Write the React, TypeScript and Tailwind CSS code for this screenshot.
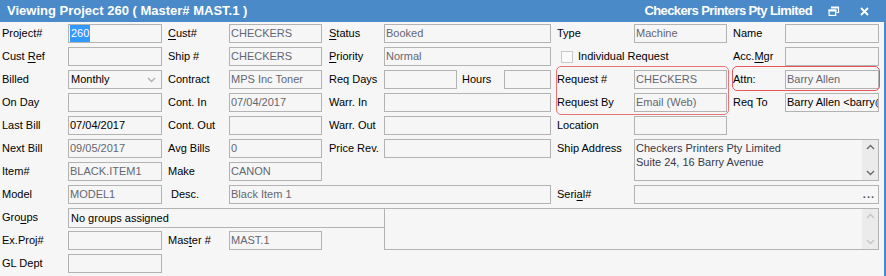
import React from 'react';

type P = { children?: React.ReactNode; className?: string };

// plain label cell
const Label = ({ children, className = '' }: P) => (
  <div className={`flex h-[19px] items-center whitespace-pre text-black ${className}`}>{children}</div>
);

// read-only style text box, dark = editable (black text)
const Box = ({ children, className = '', dark }: P & { dark?: boolean }) => (
  <div
    className={`flex h-[19px] items-center overflow-hidden whitespace-nowrap border border-[#b3b3b3] bg-[#f6f6f6] pl-[1px] ${
      dark ? 'text-black' : 'text-[#646672]'
    } ${className}`}
  >
    {children}
  </div>
);

const U = ({ children }: P) => <span className="underline underline-offset-[2px]">{children}</span>;

const Chevron = ({ up, color }: { up?: boolean; color: string }) => (
  <svg width="9" height="6" viewBox="0 0 9 6">
    <path d={up ? 'M1 5 L4.5 1.5 L8 5' : 'M1 1 L4.5 4.5 L8 1'} fill="none" stroke={color} strokeWidth="1.4" />
  </svg>
);

const Scroll = ({ color }: { color: string }) => (
  <div className="flex w-[16px] flex-col items-center justify-between self-stretch bg-[#ebebeb] py-[4px]">
    <Chevron up color={color} />
    <Chevron color={color} />
  </div>
);

export default function App() {
  return (
    <div className="h-[276px] w-[886px] overflow-hidden border-r-2 border-[#4a8ac9] bg-[#f6f6f6] font-['Liberation_Sans',Arial,sans-serif] text-[11px]">
      {/* title bar */}
      <div className="flex h-[22px] items-center justify-between bg-[#4a8ac9] pl-[7px] pr-[15px] text-[13px] font-bold text-white">
        <span>Viewing Project 260 ( Master# MAST.1 )</span>
        <div className="flex items-center">
          <span className="tracking-[-0.6px]">Checkers Printers Pty Limited</span>
          <svg className="ml-[16px]" width="12" height="10" viewBox="0 0 12 10">
            <path d="M3.5 1.5 H10.5 V6.5 H8.5" fill="none" stroke="white" strokeWidth="1.2" />
            <rect x="3" y="0.5" width="8" height="2" fill="white" />
            <rect x="1.1" y="4.1" width="6.6" height="5.3" fill="none" stroke="white" strokeWidth="1.2" />
            <rect x="0.5" y="3.5" width="8" height="2" fill="white" />
          </svg>
          <svg className="ml-[20px]" width="9" height="9" viewBox="0 0 9 9">
            <path d="M1 1 L8 8 M8 1 L1 8" stroke="white" strokeWidth="1.8" />
          </svg>
        </div>
      </div>

      <div className="grid auto-rows-[19px] grid-cols-[68px_94px_67px_93px_62px_167px_83px_93px_58px_94px] gap-y-[4px] pt-[2px]">
        {/* row 1 */}
        <Label className="col-start-1 pl-[2px]">Project#</Label>
        <Box dark className="pl-0">
          <span className="bg-[#3399ff] px-[1px] text-white">260</span>
        </Box>
        <Label className="pl-[6px]"><U>C</U>ust#</Label>
        <Box>CHECKERS</Box>
        <Label className="pl-[7px]"><U>S</U>tatus</Label>
        <Box>Booked</Box>
        <Label className="pl-[6px]">Type</Label>
        <Box>Machine</Box>
        <Label className="pl-[6px]">Name</Label>
        <Box />

        {/* row 2 */}
        <Label className="col-start-1 pl-[2px]"><span>Cust <U>R</U>ef</span></Label>
        <Box />
        <Label className="pl-[6px]">Ship #</Label>
        <Box>CHECKERS</Box>
        <Label className="pl-[7px]"><U>P</U>riority</Label>
        <Box>Normal</Box>
        <Label className="col-span-2 pl-[10px]">
          <span className="mr-[5px] h-[12px] w-[12px] border border-[#c9c9c9] bg-[#fafafa]" />
          Individual Request
        </Label>
        <Label className="pl-[6px]"><span>Acc.<U>M</U>gr</span></Label>
        <Box />

        {/* row 3 */}
        <Label className="col-start-1 pl-[2px]">Billed</Label>
        <Box dark className="justify-between pl-[2px] pr-[5px]">
          Monthly
          <Chevron color="#b0b0b0" />
        </Box>
        <Label className="pl-[6px]">Contract</Label>
        <Box>MPS Inc Toner</Box>
        <Label className="pl-[7px]">Req Days</Label>
        <div className="flex">
          <Box className="w-[73px]" />
          <Label className="w-[47px] pl-[5px]">Hours</Label>
          <Box className="flex-1" />
        </div>
        <Label className="relative pl-[6px]">
          Request #
          <div className="pointer-events-none absolute left-[5px] top-[-4px] h-[49px] w-[173px] rounded-[5px] border-[1.5px] border-[#ea7377]" />
        </Label>
        <Box>CHECKERS</Box>
        <Label className="relative pl-[6px]">
          Attn:
          <div className="pointer-events-none absolute left-[5px] top-[-4px] h-[25px] w-[148px] rounded-[5px] border-[1.5px] border-[#e6575e]" />
        </Label>
        <Box>Barry Allen</Box>

        {/* row 4 */}
        <Label className="col-start-1 pl-[2px]">On Day</Label>
        <Box />
        <Label className="pl-[6px]">Cont. In</Label>
        <Box>07/04/2017</Box>
        <Label className="pl-[7px]">Warr. In</Label>
        <Box />
        <Label className="pl-[6px]">Request By</Label>
        <Box>Email (Web)</Box>
        <Label className="pl-[6px]">Req To</Label>
        <Box dark>Barry Allen &lt;barry@checkers.com.au&gt;</Box>

        {/* row 5 */}
        <Label className="col-start-1 pl-[2px]">Last Bill</Label>
        <Box dark>07/04/2017</Box>
        <Label className="pl-[6px]">Cont. Out</Label>
        <Box />
        <Label className="pl-[7px]">Warr. Out</Label>
        <Box />
        <Label className="pl-[6px]">Location</Label>
        <Box />

        {/* row 6 */}
        <Label className="col-start-1 pl-[2px]">Next Bill</Label>
        <Box>09/05/2017</Box>
        <Label className="pl-[6px]">Avg Bills</Label>
        <Box>0</Box>
        <Label className="pl-[7px]">Price Rev.</Label>
        <Box />
        <Label className="pl-[6px]">Ship Address</Label>
        <div className="col-span-3 row-span-2 flex border border-[#b3b3b3] bg-[#f6f6f6] text-[#363a48]">
          <div className="flex-1 pl-[1px] pt-[1px] leading-[14px]">
            <div>Checkers Printers Pty Limited</div>
            <div>Suite 24, 16 Barry Avenue</div>
          </div>
          <Scroll color="#6a6a6a" />
        </div>

        {/* row 7 */}
        <Label className="col-start-1 pl-[2px]">Item#</Label>
        <Box>BLACK.ITEM1</Box>
        <Label className="pl-[6px]">Make</Label>
        <Box>CANON</Box>

        {/* row 8 */}
        <Label className="col-start-1 pl-[2px]">Model</Label>
        <Box>MODEL1</Box>
        <Label className="pl-[9px]">Desc.</Label>
        <Box className="col-span-3">Black Item 1</Box>
        <Label className="pl-[6px]"><span>Seri<U>a</U>l#</span></Label>
        <Box className="col-span-3 justify-between pr-[3px]">
          <span />
          <span className="font-bold leading-none tracking-[1px] text-[#555]">...</span>
        </Box>

        {/* row 9 */}
        <Label className="col-start-1 pl-[2px]"><span>Gro<U>u</U>ps</span></Label>
        <Box dark className="col-span-4 h-[20px] border-r-0 pl-[2px]">No groups assigned</Box>
        <div className="col-span-5 row-span-2 flex border border-[#b3b3b3] bg-[#f6f6f6]">
          <div className="flex-1" />
          <Scroll color="#c4c4c4" />
        </div>

        {/* row 10 */}
        <Label className="col-start-1 pl-[2px]">Ex.Proj#</Label>
        <Box />
        <Label className="pl-[6px]"><span>Mas<U>t</U>er #</span></Label>
        <Box>MAST.1</Box>

        {/* row 11 */}
        <Label className="col-start-1 pl-[2px]">GL Dept</Label>
        <Box />
      </div>
    </div>
  );
}
